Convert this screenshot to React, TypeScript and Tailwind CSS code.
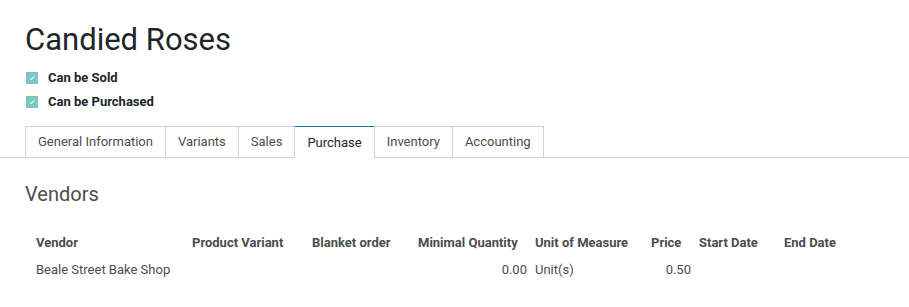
const columns = [
  { label: 'Vendor', width: 'w-[156px]' },
  { label: 'Product Variant', width: 'w-[120px]' },
  { label: 'Blanket order', width: 'w-[106px]' },
  { label: 'Minimal Quantity', width: 'w-[117px]' },
  { label: 'Unit of Measure', width: 'w-[116px]' },
  { label: 'Price', width: 'w-[48px]' },
  { label: 'Start Date', width: 'w-[85px]' },
  { label: 'End Date', width: 'w-[90px]' },
]

const tabs = ['General Information', 'Variants', 'Sales', 'Purchase', 'Inventory', 'Accounting']

function Check({ label }: { label: string }) {
  return (
    <div className="flex items-center h-6">
      <span className="w-3 h-3 bg-[#7cc7c6] flex items-center justify-center mr-[10px] ml-px">
        <svg viewBox="0 0 12 12" className="w-2 h-2">
          <path d="M2.5 6.2 L5 8.5 L9.5 3.5" fill="none" stroke="#e8f6f6" strokeWidth="1.6" />
        </svg>
      </span>
      <span className="text-[13px] font-bold text-[#212529]">{label}</span>
    </div>
  )
}

export default function App() {
  return (
    <div className="w-[909px] h-[307px] bg-white font-['Roboto',sans-serif] overflow-hidden">
      <div className="px-[25px] pt-[20px]">
        <h1 className="text-[31px] leading-[40px] text-[#212529] mb-[6px]">Candied Roses</h1>
        <Check label="Can be Sold" />
        <Check label="Can be Purchased" />
      </div>

      <div className="mt-[12px] flex border-b border-[#ced4da] pl-[26px] h-[32px]">
        {tabs.map(tab =>
          tab === 'Purchase' ? (
            <div
              key={tab}
              className="px-3 flex items-center text-[13px] text-[#212529] bg-white border-x border-t border-t-[#1d6fa5] border-x-[#ced4da] -mb-px -ml-px"
            >
              {tab}
            </div>
          ) : (
            <div
              key={tab}
              className="px-3 flex items-center text-[13px] text-[#4c4c4c] border border-[#ced4da] border-b-0 -ml-px"
            >
              {tab}
            </div>
          )
        )}
      </div>

      <div className="px-[25px] pt-[24px]">
        <h2 className="text-[20px] leading-[24px] text-[#4c4c4c]">Vendors</h2>
        <div className="mt-[24px] ml-[7px] text-[13px] text-[#4c4c4c]">
          <div className="flex h-[26px] items-center font-bold">
            {columns.map(col => (
              <div key={col.label} className={`${col.width} px-1 whitespace-nowrap`}>
                {col.label}
              </div>
            ))}
          </div>
          <div className="flex h-[28px] items-center">
            <div className="w-[156px] px-1">Beale Street Bake Shop</div>
            <div className="w-[120px] px-1"></div>
            <div className="w-[106px] px-1"></div>
            <div className="w-[117px] px-1 text-right">0.00</div>
            <div className="w-[116px] px-1">Unit(s)</div>
            <div className="w-[48px] px-1 text-right">0.50</div>
            <div className="w-[85px] px-1"></div>
            <div className="w-[90px] px-1"></div>
          </div>
        </div>
      </div>
    </div>
  )
}
